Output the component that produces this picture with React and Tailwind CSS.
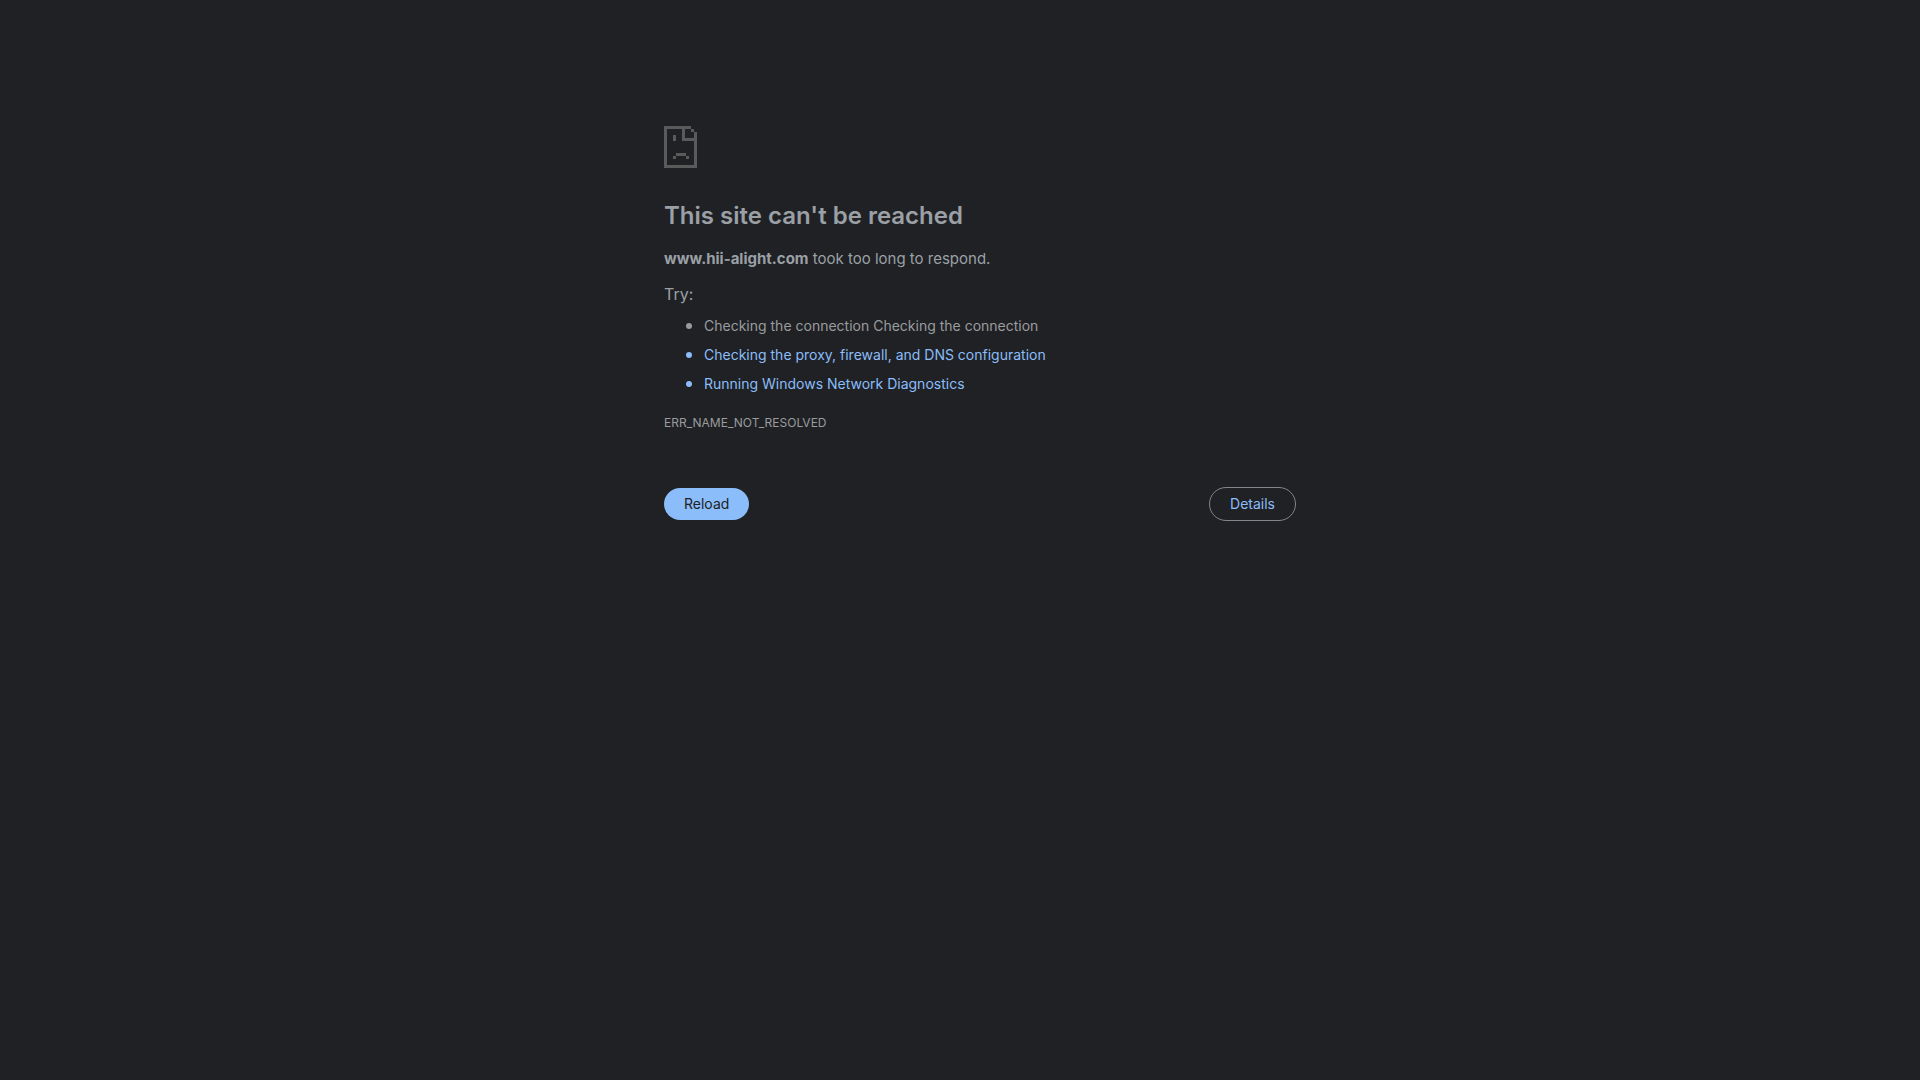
const SUGGESTIONS = [
    { label: 'Checking the connection Checking the connection' },
    { label: 'Checking the proxy, firewall, and DNS configuration', href: '#proxy' },
    { label: 'Running Windows Network Diagnostics', href: '#diagnostics' },
];

function SadPageIcon() {
    return (
        <svg className="w-[33px] h-[42px] text-[#5a5a5a]" viewBox="0 0 33 42" fill="currentColor" shapeRendering="crispEdges" aria-hidden="true">
            {/* Page outline */}
            <path d="M0 0h27v3H3v36h27V15H18V3h3v9h9V6h3v36H0z" />
            <path d="M27 3h3v3h-3z" />
            {/* Face */}
            <path d="M9 9h3v6H9zM12 27h10v3H12zM9 30h3v3H9zM22 30h3v3h-3z" />
        </svg>
    );
}

export default function App() {
    return (
        <div className="min-h-screen bg-[#202124] text-[#9aa0a6] font-['Inter',sans-serif]">
            <main className="mx-auto max-w-[672px] pl-10 pt-[126px]">
                <SadPageIcon />

                <h1 className="mt-8 text-2xl font-semibold">This site can't be reached</h1>

                <p className="mt-4 text-[15px] leading-[22px]">
                    <strong className="font-bold">www.hii-alight.com</strong> took too long to respond.
                </p>

                <p className="mt-3 text-base">Try:</p>
                <ul className="mt-[9px] list-disc pl-10 text-sm leading-[21px] space-y-2 marker:text-lg marker:leading-none">
                    {SUGGESTIONS.map((item) => (
                        <li key={item.label} className={item.href ? 'text-[#8abdf9]' : 'text-[#999c9f]'}>
                            {item.href ? <a href={item.href}>{item.label}</a> : item.label}
                        </li>
                    ))}
                </ul>

                <p className="mt-[21px] text-xs text-[#999c9f]">ERR_NAME_NOT_RESOLVED</p>

                {/* Actions */}
                <div className="mt-14 flex items-center justify-between text-sm">
                    <button type="button" className="rounded-full bg-[#8abdf9] px-5 py-1.5 text-[#202124]">Reload</button>
                    <button type="button" className="rounded-full border border-[#80868b] px-5 py-1.5 text-[#8abdf9]">Details</button>
                </div>
            </main>
        </div>
    );
}
